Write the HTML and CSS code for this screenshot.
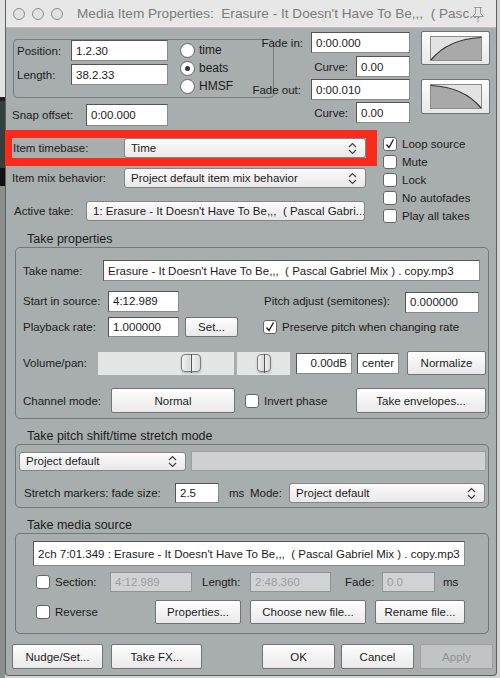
FILE: index.html
```html
<!DOCTYPE html>
<html>
<head>
<meta charset="utf-8">
<title>Media Item Properties</title>
<link rel="stylesheet" href="styles.css">
</head>
<body>
<div class="win">
  <div class="titlebar">
    <span class="light first"></span><span class="light"></span><span class="light"></span>
    <span class="title">Media Item Properties:&nbsp; Erasure - It Doesn't Have To Be,,,&nbsp; ( Pasc...</span>
    <svg class="pin" width="14" height="18" viewBox="0 0 14 18"><path d="M3 1.5h8M4.5 1.5v6l-3 3h11l-3-3v-6M7 10.5v6" fill="none" stroke="#9a9a9a" stroke-width="1"/></svg>
  </div>

  <div class="top">
    <div class="topl">
      <div class="posbox">
        <div class="posfields">
          <div class="prow"><span class="lbl l-pos">Position:</span><div class="inp i-pos">1.2.30</div></div>
          <div class="prow"><span class="lbl l-pos">Length:</span><div class="inp i-pos">38.2.33</div></div>
        </div>
        <div class="radios">
          <div class="radio"><span class="rb"></span><span>time</span></div>
          <div class="radio"><span class="rb on"></span><span>beats</span></div>
          <div class="radio"><span class="rb"></span><span>HMSF</span></div>
        </div>
      </div>
      <div class="snaprow"><span class="lbl l-snap">Snap offset:</span><div class="inp i-snap">0:00.000</div></div>
    </div>
    <div class="fades">
      <div class="frow"><span class="lbl">Fade in:</span><div class="inp i-fade">0:00.000</div></div>
      <div class="frow r2"><span class="lbl">Curve:</span><div class="inp i-curve">0.00</div></div>
      <div class="frow r3"><span class="lbl">Fade out:</span><div class="inp i-fade">0:00.010</div></div>
      <div class="frow r4"><span class="lbl">Curve:</span><div class="inp i-curve">0.00</div></div>
    </div>
    <div class="fadebtns">
      <div class="fbtn"><svg width="52" height="25" viewBox="0 0 52 25"><rect x="0.5" y="0.5" width="51" height="24" fill="#e3e3e3" stroke="#8c8c8c"/><path d="M1 24 Q18 3 51 1.5 L51 24 Z" fill="#a9a9a9"/><path d="M1 24 Q18 3 51 1.5" fill="none" stroke="#333" stroke-width="1.2"/></svg></div>
      <div class="fbtn b2"><svg width="52" height="25" viewBox="0 0 52 25"><rect x="0.5" y="0.5" width="51" height="24" fill="#e3e3e3" stroke="#8c8c8c"/><path d="M1 1.5 Q34 3 51 24 L1 24 Z" fill="#a9a9a9"/><path d="M1 1.5 Q34 3 51 24" fill="none" stroke="#333" stroke-width="1.2"/></svg></div>
    </div>
  </div>

  <div class="mid">
    <div class="midl">
      <div class="redbox">
        <span class="lbl l-tb">Item timebase:</span>
        <div class="sel s-tb"><span>Time</span><svg class="chev" width="9" height="13" viewBox="0 0 9 13"><path d="M1 5l3.5-3.5L8 5M1 8l3.5 3.5L8 8" fill="none" stroke="#444" stroke-width="1.2"/></svg></div>
      </div>
      <div class="mixrow">
        <span class="lbl l-mix">Item mix behavior:</span>
        <div class="sel s-tb"><span>Project default item mix behavior</span><svg class="chev" width="9" height="13" viewBox="0 0 9 13"><path d="M1 5l3.5-3.5L8 5M1 8l3.5 3.5L8 8" fill="none" stroke="#444" stroke-width="1.2"/></svg></div>
      </div>
      <div class="actrow">
        <span class="lbl l-act">Active take:</span>
        <div class="sel s-act"><span>1: Erasure - It Doesn't Have To Be,,,&nbsp; ( Pascal Gabri...</span><svg class="chev" width="9" height="13" viewBox="0 0 9 13"><path d="M1 5l3.5-3.5L8 5M1 8l3.5 3.5L8 8" fill="none" stroke="#444" stroke-width="1.2"/></svg></div>
      </div>
    </div>
    <div class="checks">
      <div class="chk"><span class="cb"><svg width="12" height="12" viewBox="0 0 12 12"><path d="M2.5 6.5l2.5 3L9.5 1.5" fill="none" stroke="#222" stroke-width="1.4"/></svg></span><span>Loop source</span></div>
      <div class="chk"><span class="cb"></span><span>Mute</span></div>
      <div class="chk"><span class="cb"></span><span>Lock</span></div>
      <div class="chk"><span class="cb"></span><span>No autofades</span></div>
      <div class="chk"><span class="cb"></span><span>Play all takes</span></div>
    </div>
  </div>

  <div class="stitle">Take properties</div>
  <div class="grp g1">
    <div class="row r-name">
      <span class="lbl l-name">Take name:</span>
      <div class="inp i-name">Erasure - It Doesn't Have To Be,,,&nbsp; ( Pascal Gabriel Mix ) . copy.mp3</div>
    </div>
    <div class="row r-start">
      <span class="lbl l-start">Start in source:</span>
      <div class="inp i-start">4:12.989</div>
      <span class="lbl l-pitch">Pitch adjust (semitones):</span>
      <div class="inp i-pitch">0.000000</div>
    </div>
    <div class="row r-rate">
      <span class="lbl l-start">Playback rate:</span>
      <div class="inp i-start">1.000000</div>
      <div class="btn b-set">Set...</div>
      <span class="cb c-pres"><svg width="12" height="12" viewBox="0 0 12 12"><path d="M2.5 6.5l2.5 3L9.5 1.5" fill="none" stroke="#222" stroke-width="1.4"/></svg></span>
      <span class="lbl l-cb">Preserve pitch when changing rate</span>
    </div>
    <div class="row r-vol">
      <span class="lbl l-vol">Volume/pan:</span>
      <div class="track t-vol"><span class="thumb th-vol"></span></div>
      <div class="track t-pan"><span class="thumb th-pan"></span></div>
      <div class="inp i-db">0.00dB</div>
      <div class="inp i-center">center</div>
      <div class="btn b-norm">Normalize</div>
    </div>
    <div class="row r-chan">
      <span class="lbl l-chan">Channel mode:</span>
      <div class="btn b-normal">Normal</div>
      <span class="cb c-inv"></span>
      <span class="lbl l-cb">Invert phase</span>
      <div class="btn b-env">Take envelopes...</div>
    </div>
  </div>

  <div class="stitle t2">Take pitch shift/time stretch mode</div>
  <div class="grp g2">
    <div class="row r-mode">
      <div class="sel s-pd"><span>Project default</span><svg class="chev" width="9" height="13" viewBox="0 0 9 13"><path d="M1 5l3.5-3.5L8 5M1 8l3.5 3.5L8 8" fill="none" stroke="#444" stroke-width="1.2"/></svg></div>
      <div class="blank"></div>
    </div>
    <div class="row r-str">
      <span class="lbl l-str">Stretch markers: fade size:</span>
      <div class="inp i-str">2.5</div>
      <span class="lbl l-ms">ms</span>
      <span class="lbl l-mode">Mode:</span>
      <div class="sel s-mode"><span>Project default</span><svg class="chev" width="9" height="13" viewBox="0 0 9 13"><path d="M1 5l3.5-3.5L8 5M1 8l3.5 3.5L8 8" fill="none" stroke="#444" stroke-width="1.2"/></svg></div>
    </div>
  </div>

  <div class="stitle t2">Take media source</div>
  <div class="grp g3">
    <div class="row r-file">
      <div class="inp i-file">2ch 7:01.349 : Erasure - It Doesn't Have To Be,,,&nbsp; ( Pascal Gabriel Mix ) . copy.mp3</div>
    </div>
    <div class="row r-sec">
      <span class="cb c-sec"></span>
      <span class="lbl l-sec">Section:</span>
      <div class="inp dis i-sec">4:12.989</div>
      <span class="lbl l-len">Length:</span>
      <div class="inp dis i-len">2:48.360</div>
      <span class="lbl l-fade">Fade:</span>
      <div class="inp dis i-fd">0.0</div>
      <span class="lbl l-ms2">ms</span>
    </div>
    <div class="row r-rev">
      <span class="cb c-sec"></span>
      <span class="lbl l-rev">Reverse</span>
      <div class="btn b-prop">Properties...</div>
      <div class="btn b-choose">Choose new file...</div>
      <div class="btn b-ren">Rename file...</div>
    </div>
  </div>

  <div class="bottom">
    <div class="btn b-nudge">Nudge/Set...</div>
    <div class="btn b-fx">Take FX...</div>
    <div class="btn b-ok">OK</div>
    <div class="btn b-cancel">Cancel</div>
    <div class="btn b-apply dis">Apply</div>
  </div>
</div>
</body>
</html>
```

FILE: styles.css
```css
* { box-sizing: border-box; }
html, body { margin: 0; padding: 0; }
body {
  width: 500px;
  height: 678px;
  overflow: hidden;
  font-family: "Liberation Sans", Arial, sans-serif;
  font-size: 11.5px;
  color: #1c1c1c;
  background:
    linear-gradient(to right, transparent 5px, #d2d2d2 5px),
    linear-gradient(to bottom, #e2e2e2 0 97px, #1e1e1e 97px 101px, #33403b 101px 168px, #111 168px 186px, #8a8e8d 186px);
}
.win {
  margin-left: 5px;
  width: 492px;
  height: 676px;
  background: #a8adad;
  border: 1px solid #5c5f5f;
  border-top: none;
  border-radius: 0 0 4px 4px;
}
.titlebar {
  height: 28px;
  background: #e7e7e7;
  border-bottom: 1px solid #bdbdbd;
  display: flex;
  align-items: center;
  white-space: nowrap;
  overflow: hidden;
}
.light {
  flex: none;
  width: 12px;
  height: 12px;
  border-radius: 50%;
  border: 1px solid #8c8c8c;
  background: #e1e1e1;
  margin-left: 7px;
}
.title {
  margin-left: 14px;
  font-size: 13.6px;
  color: #7b7b7b;
  flex: none;
  width: 412px;
  overflow: hidden;
}
.pin { flex: none; margin-left: -18px; margin-top: 2px; }

.lbl { flex: none; white-space: nowrap; }
.inp {
  flex: none;
  background: #fff;
  border: 1px solid #555;
  border-right-color: #8a8a8a;
  border-bottom-color: #8a8a8a;
  font-size: 11.5px;
  padding-left: 4px;
  display: flex;
  align-items: center;
  white-space: nowrap;
  overflow: hidden;
}
.inp.dis {
  background: #cfd3d3;
  border-color: #8f9494;
  color: #9aa0a0;
}
.sel {
  flex: none;
  height: 20px;
  background: linear-gradient(#fbfbfb, #e9e9e9);
  border: 1px solid #858585;
  border-radius: 3px;
  display: flex;
  align-items: center;
  justify-content: space-between;
  padding: 0 8px 0 6px;
  font-size: 11.5px;
  white-space: nowrap;
  overflow: hidden;
}
.chev { flex: none; }
.btn {
  flex: none;
  background: linear-gradient(#fefefe, #e9e9e9);
  border: 1px solid #707474;
  border-radius: 2px;
  display: flex;
  align-items: center;
  justify-content: center;
  font-size: 11.5px;
  white-space: nowrap;
}
.btn.dis {
  background: #c0c4c4;
  border-color: #9ca1a1;
  color: #8e9494;
}
.cb {
  flex: none;
  width: 14px;
  height: 14px;
  background: #fff;
  border: 1px solid #666;
  border-radius: 3px;
  display: flex;
  align-items: center;
  justify-content: center;
}

/* top */
.top { display: flex; height: 102px; }
.topl { flex: none; width: 270px; }
.posbox {
  margin: 11px 0 0 7px;
  width: 261px;
  height: 59px;
  border: 1px solid #777c7c;
  border-radius: 4px;
  display: flex;
  padding-left: 3px;
}
.prow { display: flex; align-items: center; height: 21px; }
.prow + .prow { margin-top: 3px; }
.l-pos { width: 54px; }
.i-pos { width: 97px; height: 21px; }
.radios { margin: 1px 0 0 12px; }
.radio { display: flex; align-items: center; height: 18px; font-size: 12px; }
.rb {
  width: 15px; height: 15px; border-radius: 50%;
  background: #fff; border: 1px solid #666;
  margin-right: 4px;
  display: flex; align-items: center; justify-content: center;
}
.rb.on::after { content: ""; width: 5px; height: 5px; border-radius: 50%; background: #333; }
.snaprow { display: flex; align-items: center; margin: 6px 0 0 6px; }
.l-snap { width: 74px; }
.i-snap { width: 82px; height: 22px; }

.fades { flex: none; width: 134px; margin-top: 4px; }
.frow { display: flex; align-items: center; justify-content: flex-end; height: 21px; }
.frow .lbl { margin-right: 8px; }
.frow.r2 { margin-top: 3px; }
.frow.r3, .frow.r4 { margin-top: 2px; }
.frow.r3 .lbl { margin-right: 10px; }
.i-fade { width: 99px; height: 21px; }
.i-curve { width: 54px; height: 21px; }
.fadebtns { flex: none; margin: 3px 0 0 11px; }
.fbtn {
  width: 69px; height: 34px;
  background: linear-gradient(#fdfdfd, #e8e8e8);
  border: 1px solid #6f7373;
  border-radius: 2px;
  display: flex; align-items: center; justify-content: center;
}
.fbtn.b2 { margin-top: 14px; height: 35px; }

/* mid */
.mid { display: flex; height: 102px; }
.midl { flex: none; width: 371px; }
.redbox {
  margin-left: -1px;
  width: 372px;
  height: 36px;
  border-style: solid;
  border-color: #fa2b1c;
  border-width: 8px 11px 8px 7px;
  display: flex;
  align-items: center;
}
.l-tb { width: 112px; padding-left: 1px; }
.s-tb { width: 242px; }
.mixrow { display: flex; align-items: center; margin: 2px 0 0 6px; }
.l-mix { width: 112px; }
.actrow { display: flex; align-items: center; margin: 13px 0 0 8px; }
.l-act { width: 72px; }
.s-act { width: 279px; }
.checks { flex: none; margin: 5px 0 0 6px; }
.chk { display: flex; align-items: center; height: 18px; font-size: 11.5px; }
.chk .cb { margin-right: 5px; }

/* sections */
.stitle {
  margin-left: 21px;
  height: 15px;
  line-height: 15px;
  font-size: 12.5px;
}
.stitle.t2 { margin-top: 9px; height: 16px; line-height: 16px; }
.grp {
  margin-left: 9px;
  width: 474px;
  border: 1px solid #727777;
  border-radius: 5px;
}
.row { display: flex; align-items: center; }

.g1 { height: 172px; }
.r-name { margin-top: 12px; padding-left: 7px; height: 21px; }
.l-name { width: 80px; }
.i-name { width: 377px; height: 21px; }
.r-start { margin-top: 9px; padding-left: 7px; height: 22px; }
.l-start { width: 85px; }
.i-start { width: 71px; height: 21px; }
.l-pitch { margin-left: 85px; width: 141px; }
.i-pitch { width: 74px; height: 21px; margin-top: 2px; }
.r-rate { margin-top: 4px; padding-left: 7px; height: 21px; }
.r-rate .i-start { height: 20px; }
.b-set { margin-left: 6px; width: 53px; height: 20px; }
.c-pres { margin-left: 25px; }
.l-cb { margin-left: 5px; }
.r-vol { margin-top: 14px; padding-left: 7px; height: 24px; }
.l-vol { width: 75px; }
.track {
  flex: none;
  height: 23px;
  background: #e4e5e5;
  display: flex;
  align-items: center;
}
.t-vol { width: 136px; padding-left: 83px; }
.t-pan { width: 53px; margin-left: 3px; padding-left: 20px; }
.thumb {
  flex: none;
  height: 18px;
  border: 1px solid #7d7d7d;
  border-radius: 4px;
  background: linear-gradient(to right, #f4f4f4, #d9d9d9 45%, #f4f4f4 50%, #d9d9d9);
  box-shadow: 0 1px 2px rgba(0,0,0,0.25);
  position: relative;
}
.th-vol { width: 20px; }
.th-pan { width: 14px; }
.thumb::after {
  content: "";
  position: absolute;
  left: 50%;
  top: -1px;
  bottom: -2px;
  width: 1px;
  background: #555;
}
.i-db { margin-left: 6px; width: 56px; height: 21px; justify-content: flex-end; padding-right: 4px; }
.i-center { margin-left: 5px; width: 42px; height: 21px; justify-content: center; padding: 0; }
.b-norm { margin-left: 8px; width: 79px; height: 24px; }
.r-chan { margin-top: 13px; padding-left: 7px; height: 25px; }
.l-chan { width: 88px; }
.b-normal { width: 124px; height: 25px; }
.c-inv { margin-left: 10px; }
.b-env { margin-left: auto; margin-right: 2px; width: 130px; height: 25px; }

.g2 { height: 64px; }
.r-mode { margin-top: 6px; padding-left: 3px; height: 20px; }
.s-pd { width: 167px; height: 19px; }
.blank {
  flex: none;
  margin-left: 5px;
  width: 295px;
  height: 20px;
  background: #cdd1d1;
  border: 1px solid #9aa0a0;
}
.r-str { margin-top: 11px; padding-left: 8px; height: 21px; }
.l-str { width: 151px; }
.i-str { width: 44px; height: 20px; }
.l-ms { margin-left: 10px; width: 21px; }
.l-mode { width: 39px; }
.s-mode { width: 196px; margin-top: 1px; }

.g3 { height: 101px; }
.r-file { margin-top: 7px; padding-left: 17px; }
.i-file { width: 432px; height: 25px; }
.r-sec { margin-top: 6px; padding-left: 20px; height: 20px; }
.c-sec { width: 14px; height: 14px; }
.l-sec { margin-left: 5px; width: 55px; }
.i-sec { width: 82px; height: 20px; }
.l-len { margin-left: 10px; width: 48px; }
.i-len { width: 81px; height: 20px; }
.l-fade { margin-left: 14px; width: 37px; }
.i-fd { width: 53px; height: 20px; }
.l-ms2 { margin-left: 8px; }
.r-rev { margin-top: 8px; padding-left: 20px; height: 24px; }
.l-rev { margin-left: 5px; width: 100px; }
.b-prop { width: 86px; height: 24px; }
.b-choose { margin-left: 9px; width: 116px; height: 24px; }
.b-ren { margin-left: 9px; width: 90px; height: 24px; }

.bottom { display: flex; margin: 10px 0 0 6px; }
.bottom .btn { height: 25px; }
.b-nudge { width: 91px; }
.b-fx { margin-left: 8px; width: 91px; }
.b-ok { margin-left: 60px; width: 73px; }
.b-cancel { margin-left: 6px; width: 73px; }
.b-apply { margin-left: 6px; width: 73px; }
```
